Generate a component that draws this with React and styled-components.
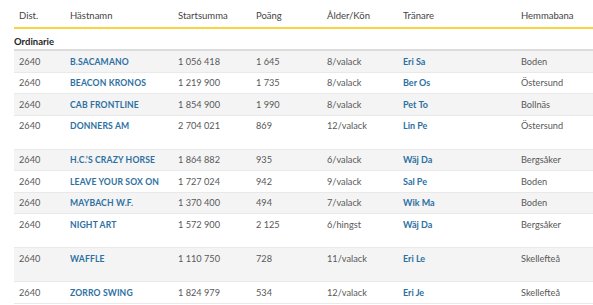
import React from "react";
import styled, { createGlobalStyle } from "styled-components";

const GlobalStyle = createGlobalStyle`
  html, body { margin: 0; padding: 0; background: #fff; overflow: hidden; }
  body { font-family: Lato, "Liberation Sans", sans-serif; }
`;

const COLS = "51px 108px 78px 71px 76px 118px 1fr";

const Table = styled.div`
  width: 640px;
  padding-left: 14px;
  font-size: 9.2px;
  color: #585858;
`;

const HeaderRow = styled.div`
  display: grid;
  grid-template-columns: ${COLS};
  align-items: center;
  padding-top: 3px;
  box-sizing: border-box;
  border-bottom: 2px solid #f6d443;
  height: 29px;
`;

const HeadCell = styled.div`
  padding-left: 5px;
  color: #444;
  font-size: 9.5px;
`;

const SectionRow = styled.div`
  height: 22px;
  box-sizing: border-box;
  padding: 5px 0 0 0;
  display: flex;
  align-items: center;
  border-bottom: 2px solid #dcdcdc;
  font-weight: 700;
  color: #1e1e1e;
  font-size: 9.5px;
`;

const Row = styled.div`
  display: grid;
  grid-template-columns: ${COLS};
  align-items: start;
  box-sizing: border-box;
  height: ${(p) => (p.$tall ? "34px" : "21.5px")};
  padding-top: 3.5px;
  line-height: 14px;
  background: ${(p) => (p.$striped ? "#f4f4f4" : "#fff")};
  border-bottom: 1px solid #e9e9e9;
`;

const Cell = styled.div`
  padding-left: 5px;
  white-space: nowrap;
`;

const LinkCell = styled(Cell)`
  color: #2d70a2;
  font-weight: 700;
  font-size: ${(p) => (p.$caps ? "8.6px" : "9px")};
  letter-spacing: ${(p) => (p.$caps ? "0.15px" : "0")};
`;

const rows = [
  ["B.SACAMANO", "1 056 418", "1 645", "8/valack", "Eri Sa", "Boden", false],
  ["BEACON KRONOS", "1 219 900", "1 735", "8/valack", "Ber Os", "Östersund", false],
  ["CAB FRONTLINE", "1 854 900", "1 990", "8/valack", "Pet To", "Bollnäs", false],
  ["DONNERS AM", "2 704 021", "869", "12/valack", "Lin Pe", "Östersund", true],
  ["H.C.’S CRAZY HORSE", "1 864 882", "935", "6/valack", "Wäj Da", "Bergsåker", false],
  ["LEAVE YOUR SOX ON", "1 727 024", "942", "9/valack", "Sal Pe", "Boden", false],
  ["MAYBACH W.F.", "1 370 400", "494", "7/valack", "Wik Ma", "Boden", false],
  ["NIGHT ART", "1 572 900", "2 125", "6/hingst", "Wäj Da", "Bergsåker", true],
  ["WAFFLE", "1 110 750", "728", "11/valack", "Eri Le", "Skellefteå", true],
  ["ZORRO SWING", "1 824 979", "534", "12/valack", "Eri Je", "Skellefteå", false],
];

const headers = ["Dist.", "Hästnamn", "Startsumma", "Poäng", "Ålder/Kön", "Tränare", "Hemmabana"];

export default function App() {
  return (
    <>
      <GlobalStyle />
      <Table>
        <HeaderRow>
          {headers.map((h) => (
            <HeadCell key={h}>{h}</HeadCell>
          ))}
        </HeaderRow>
        <SectionRow>Ordinarie</SectionRow>
        {rows.map(([name, sum, pts, age, trainer, track, tall], i) => (
          <Row key={name} $striped={i % 2 === 0} $tall={tall}>
            <Cell>2640</Cell>
            <LinkCell $caps>{name}</LinkCell>
            <Cell>{sum}</Cell>
            <Cell>{pts}</Cell>
            <Cell>{age}</Cell>
            <LinkCell>{trainer}</LinkCell>
            <Cell>{track}</Cell>
          </Row>
        ))}
      </Table>
    </>
  );
}
